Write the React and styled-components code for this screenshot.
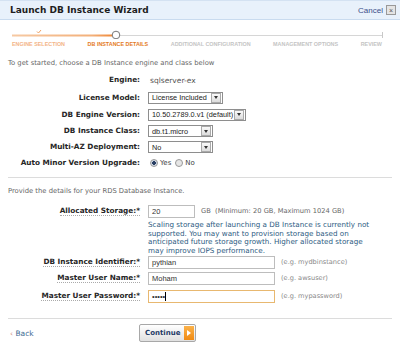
import styled, { createGlobalStyle } from 'styled-components';

const GlobalStyle = createGlobalStyle`
  html, body {
    margin: 0;
    padding: 0;
    background: #fff;
  }
  body {
    font-family: "DejaVu Sans", Verdana, sans-serif;
    font-size: 7px;
    color: #333;
  }
`;

const Wizard = styled.div`
  width: 400px;
  height: 351px;
  overflow: hidden;
`;

const Header = styled.div`
  height: 20px;
  box-sizing: border-box;
  display: flex;
  align-items: center;
  justify-content: space-between;
  padding: 0 4px 0 10px;
  background: #e8f1fb;
  border-top: 1px solid #d4e2f2;
  border-bottom: 1px solid #c9dbef;
`;

const Title = styled.h1`
  margin: 0;
  font-size: 9px;
  font-weight: bold;
  color: #1e1e1e;
`;

const CancelLink = styled.a`
  display: flex;
  align-items: center;
  gap: 3px;
  font-family: "Liberation Sans", Arial, sans-serif;
  font-size: 8px;
  color: #3b4f8a;
  text-decoration: none;
`;

const CloseBox = styled.span`
  width: 8px;
  height: 8px;
  border: 1px solid #999;
  background: #e4e4e4;
  display: flex;
  align-items: center;
  justify-content: center;
  font-size: 7px;
  line-height: 1;
  color: #555;
`;

const Steps = styled.div`
  padding: 9px 18px 0 12px;
`;

const Track = styled.svg`
  display: block;
  width: 371px;
  height: 10px;
`;

const StepLabels = styled.div`
  display: flex;
  justify-content: space-between;
  margin-top: 2px;
  line-height: 7px;
`;

const StepLabel = styled.span`
  font-family: "Liberation Sans", Arial, sans-serif;
  font-size: 5.4px;
  font-weight: bold;
  text-transform: uppercase;
  color: ${p => (p.$state === 'current' ? '#e47a1c' : p.$state === 'done' ? '#f3b487' : '#c4c4c4')};
`;

const Intro = styled.p`
  margin: ${p => p.$m};
  padding-left: 8px;
  color: #666;
  font-size: 6.8px;
  line-height: 9px;
`;

const Form = styled.div`
  display: grid;
  grid-template-columns: 140px 1fr;
  column-gap: 8px;
  align-items: center;
  margin-top: ${p => p.$top}px;
`;

const Label = styled.span`
  justify-self: end;
  font-weight: bold;
  color: #262626;
  font-size: 7.3px;
  line-height: 8px;
  white-space: nowrap;
  ${p => p.$dotted && 'border-bottom: 1px dotted #aaa;'}
`;

const Value = styled.span`
  color: #555;
  font-size: 7.5px;
  padding-left: 2px;
`;

const Field = styled.div`
  display: flex;
  align-items: center;
  gap: 6px;
  height: ${p => p.$h || 17}px;
`;

const SelectBox = styled.span`
  display: inline-flex;
  align-items: center;
  justify-content: space-between;
  width: ${p => p.$w}px;
  height: 12px;
  box-sizing: border-box;
  border: 1px solid #8e8e8e;
  background: #fff;
  font-family: "Liberation Sans", Arial, sans-serif;
  font-size: 7.3px;
  white-space: nowrap;
  color: #222;
  padding-left: 3px;
`;

const SelectArrow = styled.span`
  flex: none;
  width: 8px;
  height: 8px;
  margin-right: 1px;
  border: 1px solid #aaa;
  background: linear-gradient(#fafafa, #dcdcdc);
  display: flex;
  align-items: center;
  justify-content: center;
  &::after {
    content: '';
    border-left: 2px solid transparent;
    border-right: 2px solid transparent;
    border-top: 3px solid #333;
  }
`;

const Radios = styled.span`
  display: flex;
  align-items: center;
  gap: 2px;
  color: #444;
  font-size: 7px;
`;

const Radio = styled.span`
  width: 6px;
  height: 6px;
  border-radius: 50%;
  border: 1px solid #9a9a9a;
  background: ${p => (p.$on ? 'radial-gradient(circle, #2a3f64 0 1.6px, #cfd8e4 2px)' : '#e6e6e6')};
  margin-left: 2px;
`;

const Rule = styled.hr`
  border: none;
  border-top: 1px solid #dcdcdc;
  margin: ${p => p.$m || '0'};
`;

const TextInput = styled.span`
  display: inline-flex;
  align-items: center;
  width: ${p => p.$w}px;
  height: 13px;
  box-sizing: border-box;
  border: 1px solid ${p => (p.$focus ? '#e8b870' : '#bdbdbd')};
  padding-left: 3px;
  font-family: "Liberation Sans", Arial, sans-serif;
  font-size: 7.5px;
  color: #333;
`;

const Caret = styled.span`
  width: 1px;
  height: 9px;
  background: #000;
`;

const Hint = styled.span`
  color: #888;
  font-size: 6.6px;
  white-space: nowrap;
`;

const Unit = styled.span`
  color: #666;
  font-size: 6.7px;
  white-space: nowrap;
`;

const HelpText = styled.p`
  grid-column: 2;
  margin: 0;
  color: #2d5b82;
  font-size: 7.2px;
  line-height: 8.5px;
  width: 230px;
`;

const Footer = styled.div`
  display: flex;
  align-items: center;
  padding: 5px 0 0 10px;
`;

const BackLink = styled.a`
  color: #3d6a93;
  font-size: 7.5px;
  text-decoration: none;
  width: 129px;
  & span {
    color: #d08a7a;
  }
`;

const ContinueButton = styled.button`
  display: flex;
  align-items: center;
  gap: 4px;
  height: 18px;
  padding: 0 1px 0 5px;
  border: 1px solid #a8a8a8;
  border-radius: 2px;
  background: linear-gradient(#ffffff, #e0e0e0);
  font-family: "DejaVu Sans", Verdana, sans-serif;
  font-size: 7px;
  font-weight: bold;
  color: #1d3a66;
`;

const PlayBox = styled.span`
  width: 10px;
  height: 14px;
  background: linear-gradient(#fbb24a, #f08a12);
  display: flex;
  align-items: center;
  justify-content: center;
  &::after {
    content: '';
    border-top: 3px solid transparent;
    border-bottom: 3px solid transparent;
    border-left: 4px solid #fff;
  }
`;

const steps = [
  { name: 'Engine Selection', state: 'done' },
  { name: 'DB Instance Details', state: 'current' },
  { name: 'Additional Configuration' },
  { name: 'Management Options' },
  { name: 'Review' },
];

export default function App() {
  return (
    <Wizard>
      <GlobalStyle />
      <Header>
        <Title>Launch DB Instance Wizard</Title>
        <CancelLink href="#">Cancel <CloseBox>×</CloseBox></CancelLink>
      </Header>

      <Steps>
        <Track viewBox="0 0 371 10">
          <defs>
            <linearGradient id="prog" x1="0" x2="1">
              <stop offset="0" stopColor="#f6c9a3" />
              <stop offset="0.8" stopColor="#f3b07a" />
              <stop offset="1" stopColor="#f08a3a" />
            </linearGradient>
          </defs>
          <line x1="0" y1="6.5" x2="370" y2="6.5" stroke="#d6d6d6" />
          <line x1="370.5" y1="3" x2="370.5" y2="9" stroke="#c8c8c8" />
          <rect x="0" y="5.5" width="100" height="2" fill="url(#prog)" />
          <path d="M25 2.5 l1.5 1.5 l2.5 -3" fill="none" stroke="#f0a060" strokeWidth="1" />
          <circle cx="104" cy="6" r="3.8" fill="#fff" stroke="#777" strokeWidth="1" />
        </Track>
        <StepLabels>
          {steps.map(s => (
            <StepLabel key={s.name} $state={s.state}>{s.name}</StepLabel>
          ))}
        </StepLabels>
      </Steps>

      <Intro $m="11px 0 0 0">To get started, choose a DB Instance engine and class below</Intro>

      <Form $top={3}>
        <Label>Engine:</Label>
        <Field $h={18}><Value>sqlserver-ex</Value></Field>

        <Label>License Model:</Label>
        <Field><SelectBox $w={75}>License Included <SelectArrow /></SelectBox></Field>

        <Label>DB Engine Version:</Label>
        <Field><SelectBox $w={98}>10.50.2789.0.v1 (default) <SelectArrow /></SelectBox></Field>

        <Label>DB Instance Class:</Label>
        <Field $h={16}><SelectBox $w={65}>db.t1.micro <SelectArrow /></SelectBox></Field>

        <Label>Multi-AZ Deployment:</Label>
        <Field $h={16}><SelectBox $w={65}>No <SelectArrow /></SelectBox></Field>

        <Label>Auto Minor Version Upgrade:</Label>
        <Field $h={16}>
          <Radios><Radio $on /> Yes <Radio /> No</Radios>
        </Field>
      </Form>

      <Rule $m="6px 8px 0 8px" />
      <Intro $m="9px 0 0 0">Provide the details for your RDS Database Instance.</Intro>

      <Form $top={5}>
        <Label $dotted>Allocated Storage:*</Label>
        <Field $h={20}>
          <TextInput $w={47}>20</TextInput>
          <Unit>GB&nbsp; (Minimum: 20 GB, Maximum 1024 GB)</Unit>
        </Field>
        <HelpText>
          Scaling storage after launching a DB Instance is currently not supported. You may want to provision storage based on anticipated future storage growth. Higher allocated storage may improve IOPS performance.
        </HelpText>

        <Label $dotted>DB Instance Identifier:*</Label>
        <Field $h={14}>
          <TextInput $w={127}>pythian</TextInput>
          <Hint>(e.g. mydbinstance)</Hint>
        </Field>

        <Label $dotted>Master User Name:*</Label>
        <Field $h={18}>
          <TextInput $w={127}>Moham</TextInput>
          <Hint>(e.g. awsuser)</Hint>
        </Field>

        <Label $dotted>Master User Password:*</Label>
        <Field $h={18}>
          <TextInput $w={127} $focus>•••••<Caret /></TextInput>
          <Hint>(e.g. mypassword)</Hint>
        </Field>
      </Form>

      <Rule $m="13px 8px 0 8px" />
      <Footer>
        <BackLink href="#"><span>‹</span> Back</BackLink>
        <ContinueButton>Continue <PlayBox /></ContinueButton>
      </Footer>
    </Wizard>
  );
}
